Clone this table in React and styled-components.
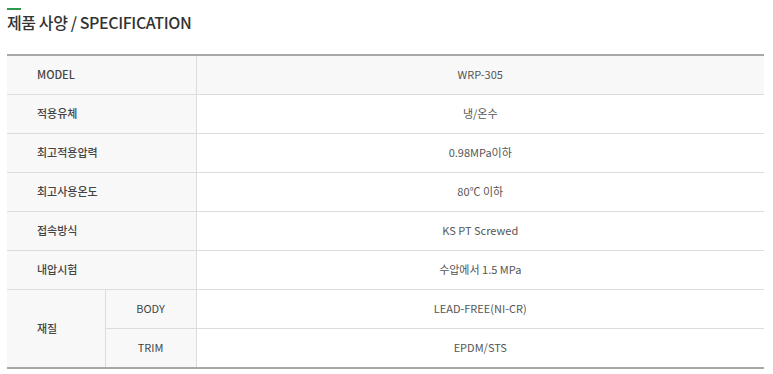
import React from 'react';
import styled, { createGlobalStyle } from 'styled-components';

const GlobalStyle = createGlobalStyle`
    body {
        margin: 0;
        background: #fff;
        font-family: 'Noto Sans CJK KR', 'Noto Sans', sans-serif;
    }
`;

const specs = [
    { label: 'MODEL', value: 'WRP-305', head: true },
    { label: '적용유체', value: '냉/온수' },
    { label: '최고적용압력', value: '0.98MPa이하' },
    { label: '최고사용온도', value: '80℃ 이하' },
    { label: '접속방식', value: 'KS PT Screwed' },
    { label: '내압시험', value: '수압에서 1.5 MPa' },
];

const materials = [
    { part: 'BODY', value: 'LEAD-FREE(NI-CR)' },
    { part: 'TRIM', value: 'EPDM/STS' },
];

const App = () => (
    <Page>
        <GlobalStyle />
        <Title>제품 사양 / SPECIFICATION</Title>
        <Table>
            <colgroup>
                <col style={{ width: 98 }} />
                <col style={{ width: 91 }} />
                <col />
            </colgroup>
            <tbody>
                {specs.map((row) => (
                    <tr key={row.label}>
                        <Label colSpan={2}>{row.label}</Label>
                        <Value head={row.head ? 1 : 0}>{row.value}</Value>
                    </tr>
                ))}
                {materials.map((row, i) => (
                    <tr key={row.part}>
                        {i === 0 && <Label rowSpan={2}>재질</Label>}
                        <SubLabel>{row.part}</SubLabel>
                        <Value>{row.value}</Value>
                    </tr>
                ))}
            </tbody>
        </Table>
    </Page>
);

const Page = styled.div`
    padding: 8px 9px 0 7px;
    width: 757px;
`;

const Title = styled.h2`
    position: relative;
    margin: 0 0 22px;
    padding-top: 4px;
    font-size: 16px;
    font-weight: 500;
    letter-spacing: -0.4px;
    color: #333;
    line-height: 20px;

    &::before {
        content: '';
        position: absolute;
        left: 0;
        top: 0;
        width: 14px;
        height: 2px;
        background: #2f9a4c;
    }
`;

const Table = styled.table`
    width: 757px;
    border-collapse: collapse;
    table-layout: fixed;
    border-top: 2px solid #a8a8a8;
    border-bottom: 2px solid #a8a8a8;
    font-size: 11px;
    color: #555;
`;

const Cell = styled.td`
    height: 36px;
    padding: 0 0 2px;
    border-bottom: 1px solid #dcdcdc;
    line-height: 14px;
`;

const Label = styled(Cell)`
    padding-left: 30px;
    background: #f8f8f8;
    border-right: 1px solid #dcdcdc;
    color: #444;
    font-weight: 500;
`;

const SubLabel = styled(Cell)`
    text-align: center;
    background: #f8f8f8;
    border-right: 1px solid #dcdcdc;
    color: #444;
`;

const Value = styled(Cell)`
    text-align: center;
    background: ${({ head }) => (head ? '#f8f8f8' : '#fff')};
`;

export default App;
